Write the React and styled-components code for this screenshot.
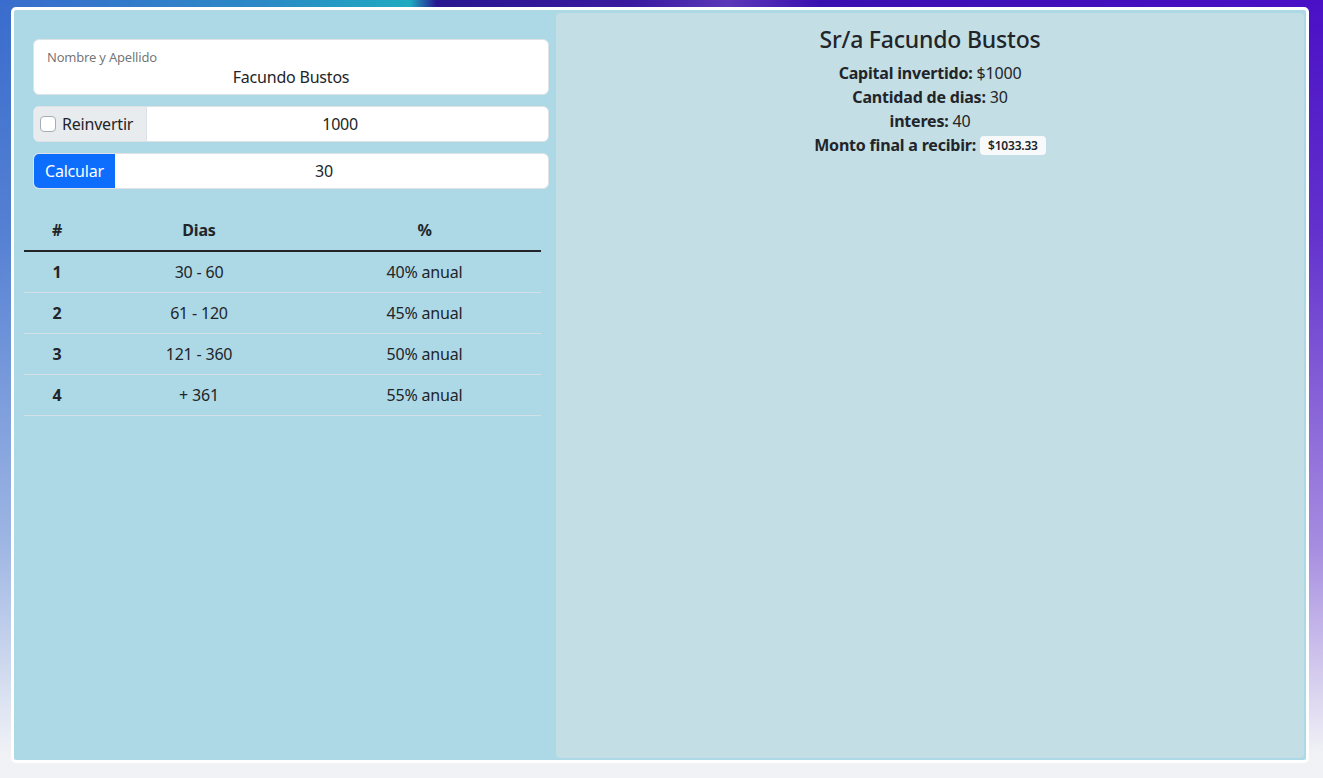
import React from "react";
import styled, { createGlobalStyle } from "styled-components";

const GlobalStyle = createGlobalStyle`
  html, body { margin: 0; padding: 0; }
  body {
    font-family: "Noto Sans", "Open Sans", sans-serif;
    font-size: 16px;
    line-height: 1.5;
    letter-spacing: -0.2px;
    color: #212529;
    background-color: #f1f2f6;
    background-image:
      linear-gradient(180deg, rgba(241,242,246,0) 0%, rgba(241,242,246,0.15) 30%, rgba(241,242,246,0.55) 70%, #f1f2f6 97%),
      linear-gradient(90deg, #3a6ccd 0%, #2b8ac6 20%, #1faac0 31%, #2a1690 33%, #3a1aa0 48%, #5a38b8 55%, #3a0fb0 62%, #4a10c6 100%);
    background-repeat: no-repeat;
    min-height: 100vh;
  }
  * { box-sizing: border-box; }
`;

const Page = styled.div`
  padding: 7px 14px 15px 11px;
`;

const Card = styled.div`
  height: 756px;
  border: 3px solid #ffffff;
  border-radius: 5px;
  background: #add8e6;
  display: flex;
`;

const LeftColumn = styled.div`
  width: 542px;
  flex-shrink: 0;
  padding-top: 29px;
  display: flex;
  flex-direction: column;
`;

const FormArea = styled.div`
  margin: 0 7px 0 19px;
  display: flex;
  flex-direction: column;
  gap: 11px;
`;

const Floating = styled.div`
  position: relative;
  height: 56px;
  background: #fff;
  border: 1px solid #dee2e6;
  border-radius: 6px;
`;

const FloatLabel = styled.label`
  position: absolute;
  left: 13px;
  top: 7px;
  font-size: 13px;
  color: rgba(33, 37, 41, 0.65);
  line-height: 20px;
`;

const FloatValue = styled.div`
  padding-top: 25px;
  text-align: center;
  line-height: 24px;
`;

const InputGroup = styled.div`
  display: flex;
  height: 36px;
  border-radius: 6px;
  overflow: hidden;
  border: 1px solid #dee2e6;
  background: #fff;
`;

const Addon = styled.label`
  display: flex;
  align-items: center;
  gap: 6px;
  padding: 0 13px 0 6px;
  background: #e9ecef;
  border-right: 1px solid #dee2e6;
  flex-shrink: 0;
`;

const Check = styled.span`
  width: 16px;
  height: 16px;
  border: 1px solid #a8adb3;
  border-radius: 4px;
  background: #fff;
  flex-shrink: 0;
`;

const Button = styled.div`
  display: flex;
  align-items: center;
  padding: 0 12px;
  background: #0d6efd;
  color: #fff;
  width: 82px;
  margin: -1px 0 -1px -1px;
  border-radius: 6px 0 0 6px;
`;

const Field = styled.div`
  flex: 1;
  display: flex;
  align-items: center;
  justify-content: center;
  padding-right: 15px;
`;

const Table = styled.table`
  margin: 21px 15px 0 10px;
  width: 517px;
  border-collapse: collapse;
  text-align: center;
`;

const Th = styled.th`
  height: 41px;
  padding: 0;
  font-weight: 700;
  width: ${(p) => p.$w || "auto"};
`;

const HeadRow = styled.tr`
  border-bottom: 2px solid #212529;
`;

const Row = styled.tr`
  border-bottom: 1px solid #d3e1e7;
`;

const Td = styled.td`
  height: 41px;
  padding: 0;
`;

const RightPanel = styled.div`
  flex: 1;
  margin: 3px 2px 2px 0;
  background: #c4dee5;
  border-radius: 4px;
  padding-top: 12px;
  text-align: center;
`;

const Title = styled.h4`
  margin: 0 0 7px;
  font-size: 23px;
  font-weight: 500;
  line-height: 29px;
`;

const Line = styled.p`
  margin: 0;
  line-height: 24px;
`;

const Badge = styled.span`
  display: inline-block;
  margin-left: 4px;
  padding: 2px 8px;
  font-size: 12px;
  font-weight: 600;
  line-height: 15px;
  background: #f8f9fa;
  border-radius: 4px;
  vertical-align: 1px;
`;

const rows = [
  ["1", "30 - 60", "40% anual"],
  ["2", "61 - 120", "45% anual"],
  ["3", "121 - 360", "50% anual"],
  ["4", "+ 361", "55% anual"],
];

export default function App() {
  return (
    <>
      <GlobalStyle />
      <Page>
        <Card>
          <LeftColumn>
            <FormArea>
              <Floating>
                <FloatLabel>Nombre y Apellido</FloatLabel>
                <FloatValue>Facundo Bustos</FloatValue>
              </Floating>
              <InputGroup>
                <Addon>
                  <Check />
                  Reinvertir
                </Addon>
                <Field>1000</Field>
              </InputGroup>
              <InputGroup>
                <Button>Calcular</Button>
                <Field>30</Field>
              </InputGroup>
            </FormArea>
            <Table>
              <thead>
                <HeadRow>
                  <Th $w="66px">#</Th>
                  <Th $w="218px">Dias</Th>
                  <Th>%</Th>
                </HeadRow>
              </thead>
              <tbody>
                {rows.map((r) => (
                  <Row key={r[0]}>
                    <Th as="td">{r[0]}</Th>
                    <Td>{r[1]}</Td>
                    <Td>{r[2]}</Td>
                  </Row>
                ))}
              </tbody>
            </Table>
          </LeftColumn>
          <RightPanel>
            <Title>Sr/a Facundo Bustos</Title>
            <Line><b>Capital invertido:</b> $1000</Line>
            <Line><b>Cantidad de dias:</b> 30</Line>
            <Line><b>interes:</b> 40</Line>
            <Line>
              <b>Monto final a recibir:</b>
              <Badge>$1033.33</Badge>
            </Line>
          </RightPanel>
        </Card>
      </Page>
    </>
  );
}
